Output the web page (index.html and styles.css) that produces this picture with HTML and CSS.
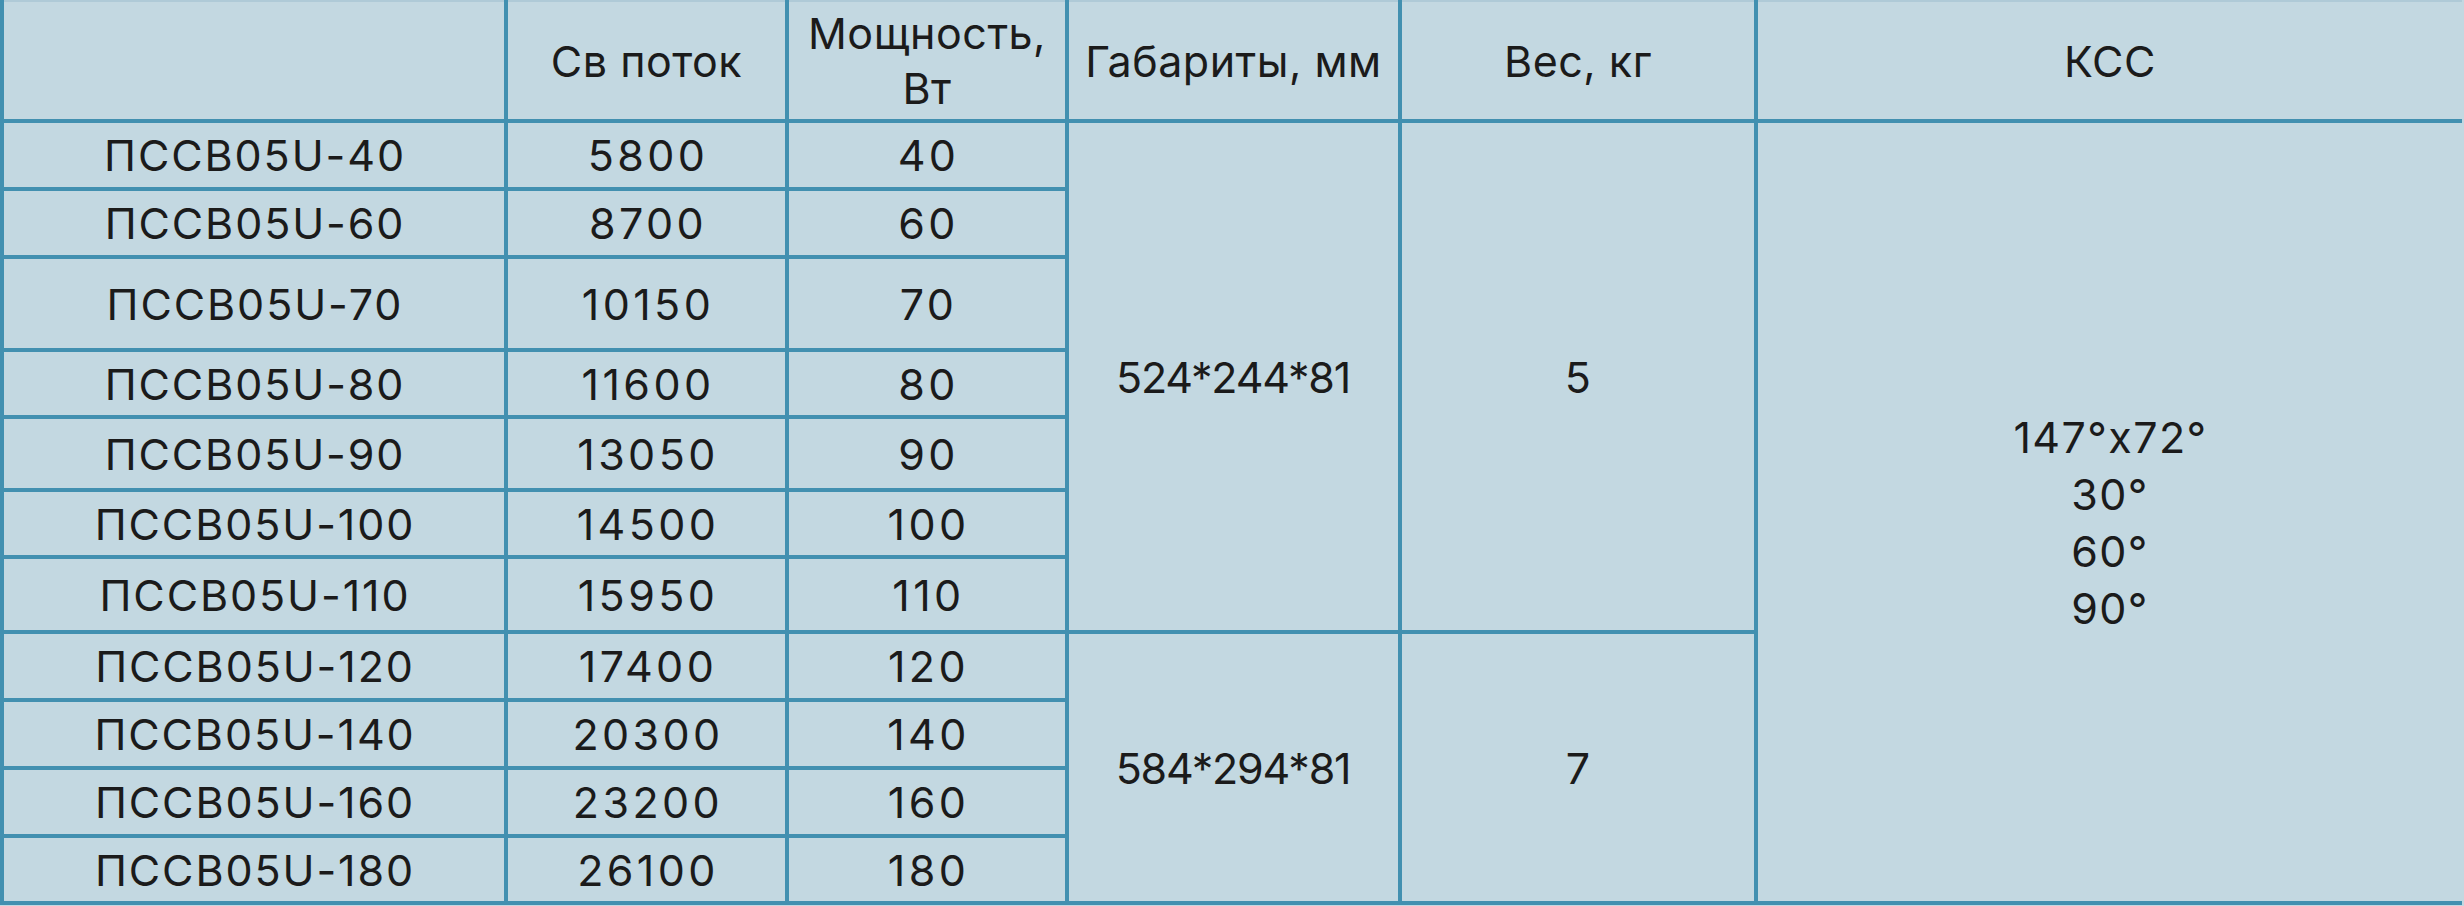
FILE: index.html
```html
<!DOCTYPE html>
<html lang="ru">
<head>
<meta charset="utf-8">
<title>ПССВ05U</title>
<link rel="stylesheet" href="styles.css">
</head>
<body>
<table class="spec">
  <colgroup>
    <col class="c-model">
    <col class="c-flux">
    <col class="c-power">
    <col class="c-size">
    <col class="c-weight">
    <col class="c-kss">
  </colgroup>
  <thead>
    <tr class="head">
      <th></th>
      <th>Св поток</th>
      <th class="two">Мощность,<br>Вт</th>
      <th>Габариты, мм</th>
      <th>Вес, кг</th>
      <th class="last">КСС</th>
    </tr>
  </thead>
  <tbody>
    <tr class="h68">
      <td>ПССВ05U-40</td><td>5800</td><td>40</td>
      <td rowspan="7" class="size">524*244*81</td>
      <td rowspan="7">5</td>
      <td rowspan="11" class="last kss">147°x72°<br>30°<br>60°<br>90°</td>
    </tr>
    <tr class="h68"><td>ПССВ05U-60</td><td>8700</td><td>60</td></tr>
    <tr class="h93"><td>ПССВ05U-70</td><td>10150</td><td>70</td></tr>
    <tr class="h67"><td>ПССВ05U-80</td><td>11600</td><td>80</td></tr>
    <tr class="h73"><td>ПССВ05U-90</td><td>13050</td><td>90</td></tr>
    <tr class="h67"><td>ПССВ05U-100</td><td>14500</td><td>100</td></tr>
    <tr class="h75"><td>ПССВ05U-110</td><td>15950</td><td>110</td></tr>
    <tr class="h68">
      <td>ПССВ05U-120</td><td>17400</td><td>120</td>
      <td rowspan="4" class="size">584*294*81</td>
      <td rowspan="4">7</td>
    </tr>
    <tr class="h68"><td>ПССВ05U-140</td><td>20300</td><td>140</td></tr>
    <tr class="h68"><td>ПССВ05U-160</td><td>23200</td><td>160</td></tr>
    <tr class="h67"><td>ПССВ05U-180</td><td>26100</td><td>180</td></tr>
  </tbody>
</table>
</body>
</html>
```

FILE: styles.css
```css
html, body {
  margin: 0;
  padding: 0;
  background: #c3d8e1;
}

body {
  width: 2464px;
  height: 906px;
  overflow: hidden;
}

.spec {
  border-collapse: collapse;
  table-layout: fixed;
  width: 2462px;
  background: #c3d8e1;
  font-family: "Inter", "Liberation Sans", sans-serif;
  font-size: 43px;
  font-weight: 400;
  color: #1b1b1b;
  border-top: 2px solid #afcad7;
  border-left: 4px solid #4290b0;
  border-bottom: 4px solid #4290b0;
}

.c-model { width: 504px; }
.c-flux { width: 281px; }
.c-power { width: 280px; }
.c-size { width: 333px; }
.c-weight { width: 356px; }
.c-kss { width: 706px; }

.spec th,
.spec td {
  border: 4px solid #4290b0;
  padding: 0;
  text-align: center;
  vertical-align: middle;
  font-weight: 400;
  line-height: 56px;
  white-space: nowrap;
}

.spec th {
  letter-spacing: 0.5px;
}

.spec td {
  letter-spacing: 3.4px;
  text-indent: 3px;
}

.spec tbody td:first-child {
  letter-spacing: 1.9px;
  text-indent: 2px;
}

.spec td.size {
  letter-spacing: -1.2px;
  text-indent: -1px;
}

.spec thead th {
  border-top: 2px solid #afcad7;
}

.spec .last {
  border-right: 0;
}

.head { height: 120px; }
.spec th.two { line-height: 55px; }

.h67 { height: 67px; }
.h68 { height: 68px; }
.h73 { height: 73px; }
.h75 { height: 75px; }
.h93 { height: 93px; }

.spec td.kss {
  line-height: 57px;
  letter-spacing: 1.4px;
  text-indent: 1px;
  padding-top: 22px;
}
```
